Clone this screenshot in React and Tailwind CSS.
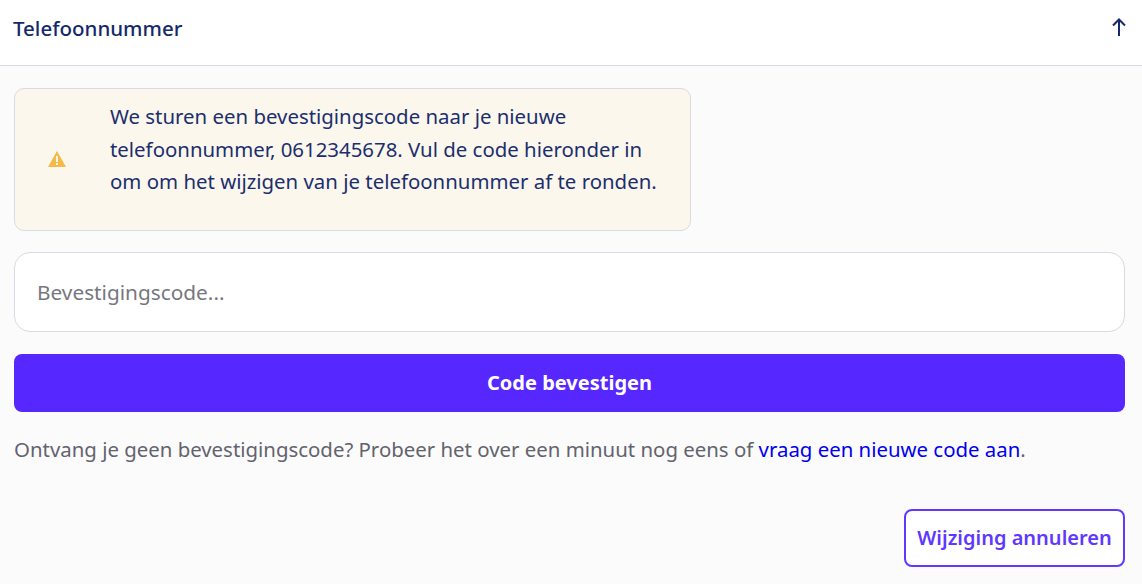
const App = () => {
  return (
    <div className="h-[584px] overflow-hidden bg-[#fbfbfc] font-['Noto_Sans',sans-serif] text-[#1b2f6e]">
      <div className="h-[66px] flex items-center justify-between pl-[13px] pr-[16px] pb-[8px] bg-white border-b border-[#d9dae3]">
        <h2 className="text-[20.5px] font-medium text-[#13296b]">Telefoonnummer</h2>
        <svg width="14" height="18" viewBox="0 0 14 18" fill="none" stroke="#13296b" strokeWidth="2" className="mb-[3px]">
          <path d="M7 18 V1.5" />
          <path d="M1 7.5 L7 1.5 L13 7.5" />
        </svg>
      </div>

      <div className="flex flex-col pl-[14px] pr-[17px] pt-[22px]">
        <div className="flex items-center w-[677px] h-[143px] bg-[#fbf7ec] border border-[#d9dae3] rounded-[10px]">
          <div className="w-[95px] flex shrink-0 pl-[33px] pb-[1px]">
            <svg width="18" height="16" viewBox="0 0 18 16">
              <path d="M9 0 L18 16 L0 16 Z" fill="#f5b947" />
              <rect x="8" y="5" width="2" height="6" fill="#fbf7ec" />
              <rect x="8" y="12" width="2" height="2" fill="#fbf7ec" />
            </svg>
          </div>
          <p className="text-[20.4px] leading-[32.5px] pb-[21px] text-[#1b2f6e]">
            We sturen een bevestigingscode naar je nieuwe
            <br />
            telefoonnummer, 0612345678. Vul de code hieronder in
            <br />
            om om het wijzigen van je telefoonnummer af te ronden.
          </p>
        </div>

        <input
          placeholder="Bevestigingscode..."
          className="mt-[21px] h-[80px] px-[22px] bg-white border border-[#d9dae3] rounded-[16px] text-[20.8px] placeholder:text-[#77777f] outline-none"
        />

        <button className="mt-[22px] h-[58px] rounded-[8px] bg-[#5627ff] text-white text-[20px] font-bold">
          Code bevestigen
        </button>

        <p className="mt-[21px] text-[20.4px] leading-[32px] text-[#63636d]">
          Ontvang je geen bevestigingscode? Probeer het over een minuut nog eens of{" "}
          <a className="text-[#0000ee]" href="#">
            vraag een nieuwe code aan
          </a>
          .
        </p>

        <div className="flex justify-end mt-[44px]">
          <button className="w-[221px] h-[58px] rounded-[8px] bg-white border-2 border-[#5f38ff] text-[#5f38ff] text-[20px] font-semibold">
            Wijziging annuleren
          </button>
        </div>
      </div>
    </div>
  );
};

export default App;
